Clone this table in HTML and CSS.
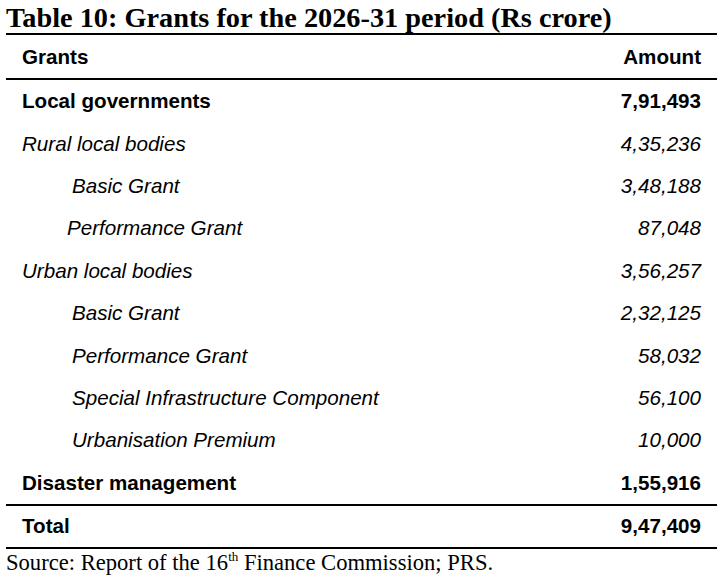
FILE: index.html
```html
<!DOCTYPE html>
<html lang="en">
<head>
<meta charset="utf-8">
<title>Table 10: Grants for the 2026-31 period</title>
<link rel="stylesheet" href="styles.css">
</head>
<body>
<div class="page">
  <div class="title">Table 10: Grants for the 2026-31 period (Rs crore)</div>
  <div class="row head"><span>Grants</span><span class="num">Amount</span></div>
  <div class="body">
    <div class="row bold"><span>Local governments</span><span class="num">7,91,493</span></div>
    <div class="row ital"><span>Rural local bodies</span><span class="num">4,35,236</span></div>
    <div class="row ital"><span class="ind">Basic Grant</span><span class="num">3,48,188</span></div>
    <div class="row ital"><span class="ind-s">Performance Grant</span><span class="num">87,048</span></div>
    <div class="row ital"><span>Urban local bodies</span><span class="num">3,56,257</span></div>
    <div class="row ital"><span class="ind">Basic Grant</span><span class="num">2,32,125</span></div>
    <div class="row ital"><span class="ind">Performance Grant</span><span class="num">58,032</span></div>
    <div class="row ital"><span class="ind">Special Infrastructure Component</span><span class="num">56,100</span></div>
    <div class="row ital"><span class="ind">Urbanisation Premium</span><span class="num">10,000</span></div>
    <div class="row bold"><span>Disaster management</span><span class="num">1,55,916</span></div>
  </div>
  <div class="row bold total"><span>Total</span><span class="num">9,47,409</span></div>
  <div class="source">Source: Report of the 16<sup class="sup">th</sup> Finance Commission; PRS.</div>
</div>
</body>
</html>
```
FILE: styles.css
```css
html, body {
  margin: 0;
  padding: 0;
  background: #fff;
}
.page {
  width: 711px;
  margin-left: 6px;
  color: #000;
}
.title {
  font-family: "Liberation Serif", "Times New Roman", serif;
  font-weight: 700;
  font-size: 28.3px;
  line-height: 31px;
  padding-top: 2px;
  border-bottom: 2px solid #000;
  white-space: nowrap;
}
.row {
  display: grid;
  grid-template-columns: 1fr auto;
  align-items: center;
  padding: 0 16px 0 16px;
  height: 42.4px;
  font-family: "Liberation Sans", Arial, sans-serif;
  font-size: 20.6px;
  white-space: nowrap;
}
.head {
  height: 43px;
  font-weight: 700;
  border-bottom: 2px solid #000;
}
.body {
  border-bottom: 2px solid #000;
}
.bold {
  font-weight: 700;
}
.ital {
  font-style: italic;
}
.ind {
  padding-left: 50px;
}
.ind-s {
  padding-left: 45px;
}
.total {
  height: 41px;
  border-bottom: 2px solid #000;
}
.source {
  font-family: "Liberation Serif", "Times New Roman", serif;
  font-size: 22.6px;
  line-height: 26px;
  padding-top: 1px;
  white-space: nowrap;
}
.sup {
  font-size: 13px;
  line-height: 0;
  vertical-align: 9px;
}
```
